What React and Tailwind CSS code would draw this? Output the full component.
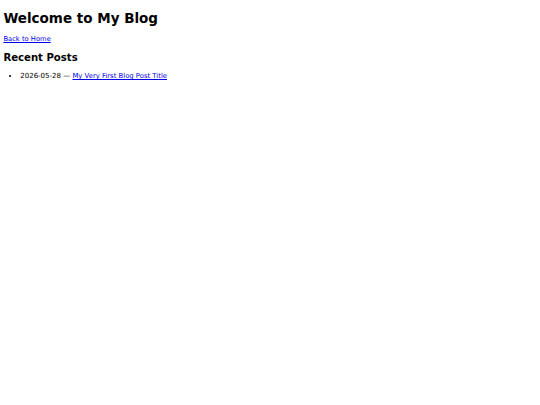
import React from "react";

const posts = [
  { date: "2026-05-28", title: "My Very First Blog Post Title", href: "#" },
];

const App = () => {
  return (
    <div className="min-h-screen bg-white text-black px-[3.4px] pt-px font-['DejaVu_Sans',sans-serif] text-[6.75px] leading-[normal]">
      <h1 className="mt-[8.5px] text-[13.5px] font-bold leading-[normal]">
        Welcome to My Blog
      </h1>
      <p className="mt-[9.5px]">
        <a href="#" className="text-[#0000ee] underline">
          Back to Home
        </a>
      </p>
      <h2 className="mt-[9px] text-[10.125px] font-bold leading-[normal]">
        Recent Posts
      </h2>
      <ul className="mt-[9px] pl-[16.9px] list-disc">
        {posts.map((post, index) => (
          <li key={index}>
            <span className="text-[7px]">{post.date} — </span>
            <a href={post.href} className="text-[6.85px] text-[#0000ee] underline">
              {post.title}
            </a>
          </li>
        ))}
      </ul>
    </div>
  );
};

export default App;
